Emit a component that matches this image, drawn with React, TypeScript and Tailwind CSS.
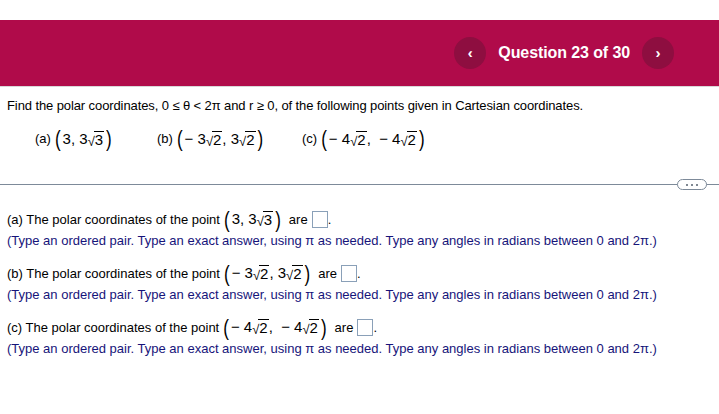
const Sqrt = ({ n }: { n: string }) => (
  <span className="inline-flex items-end">
    <span className="text-[13px] leading-none -mr-[1px] translate-y-[1px]">√</span>
    <span className="border-t border-black leading-[15px] px-[1px]">{n}</span>
  </span>
);

const Paren = ({ c }: { c: string }) => (
  <span className="inline-block text-[17px] leading-none scale-y-[1.35] font-light mx-[2px]">{c}</span>
);

const Pair = ({ children }: { children: React.ReactNode }) => (
  <span className="inline-flex items-center text-[15px] mx-[2px]">
    <Paren c="(" />
    {children}
    <Paren c=")" />
  </span>
);

const points = [
  {
    label: "a",
    value: (
      <Pair>
        3, 3<Sqrt n="3" />
      </Pair>
    )
  },
  {
    label: "b",
    value: (
      <Pair>
        − 3<Sqrt n="2" />, 3<Sqrt n="2" />
      </Pair>
    )
  },
  {
    label: "c",
    value: (
      <Pair>
        − 4<Sqrt n="2" />, &nbsp;− 4<Sqrt n="2" />
      </Pair>
    )
  }
];

const hint =
  "(Type an ordered pair. Type an exact answer, using π as needed. Type any angles in radians between 0 and 2π.)";

const App = () => {
  return (
    <main
      className="min-h-screen w-[719px] bg-white text-black"
      style={{ fontFamily: '"Liberation Sans", Arial, sans-serif' }}
    >
      <header className="mt-5 flex h-[66px] items-center justify-end bg-[#b00b4a] pr-[45px]">
        <button className="flex h-8 w-8 items-center justify-center rounded-full bg-[#8e0e40] text-white text-[15px] font-bold">
          ‹
        </button>
        <span className="mx-3 text-[16px] font-bold tracking-[-0.1px] text-white">Question 23 of 30</span>
        <button className="flex h-8 w-8 items-center justify-center rounded-full bg-[#8e0e40] text-white text-[15px] font-bold">
          ›
        </button>
      </header>
      <div className="h-px bg-[#d8d8d8]" />

      <section className="px-[7px] pt-[9px]">
        <p className="text-[13px] tracking-[-0.1px]">
          Find the polar coordinates, 0 ≤ θ &lt; 2π and r ≥ 0, of the following points given in Cartesian coordinates.
        </p>
        <div className="mt-[12px] flex pl-[28px] text-[13px]">
          {points.map((p, i) => (
            <span
              key={p.label}
              className={
                i === 0 ? "flex w-[122px] items-center" : i === 1 ? "flex w-[145px] items-center" : "flex items-center"
              }
            >
              ({p.label}) {p.value}
            </span>
          ))}
        </div>
      </section>

      <div className="relative mt-[34px] h-px bg-[#7d8a99]">
        <span className="absolute left-[677px] top-[-5px] flex h-[11px] w-[30px] items-center justify-center gap-[3px] rounded-full border border-[#7d8a99] bg-white">
          <span className="h-[2px] w-[2px] rounded-full bg-[#55606e]" />
          <span className="h-[2px] w-[2px] rounded-full bg-[#55606e]" />
          <span className="h-[2px] w-[2px] rounded-full bg-[#55606e]" />
        </span>
      </div>

      <section className="px-[7px] pt-[23px] text-[13px]">
        {points.map((p) => (
          <div key={p.label} className="mb-[12px]">
            <div className="flex items-center">
              ({p.label}) The polar coordinates of the point {p.value}
              <span className="ml-[4px]">are</span>
              <span className="ml-[4px] inline-block h-[17px] w-[16px] border border-[#8aa0b8]" />
              <span>.</span>
            </div>
            <p className="text-[#16147a]">{hint}</p>
          </div>
        ))}
      </section>
    </main>
  );
};

export default App;
